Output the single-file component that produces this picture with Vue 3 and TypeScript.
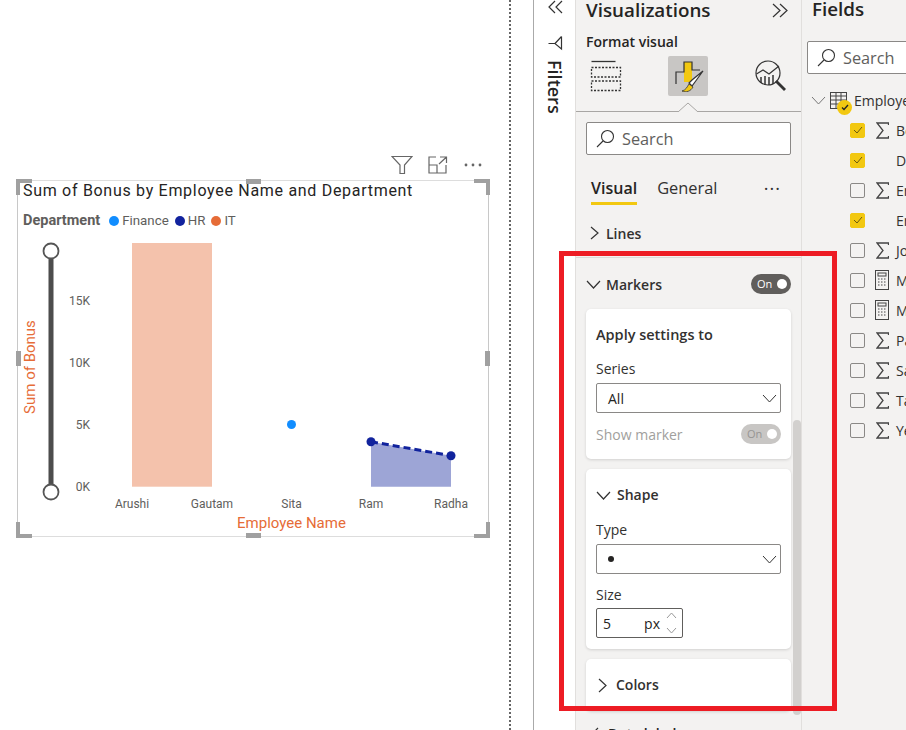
<template>
  <div class="report">
    <main class="canvas">
      <div class="visual-header">
        <svg width="22" height="20" viewBox="0 0 22 20" fill="none" stroke="#666" stroke-width="1.2">
          <path d="M1 1.5H21L13.5 10V18.500H9V10Z" />
        </svg>
        <svg width="20" height="18" viewBox="0 0 20 18" fill="none" stroke="#666" stroke-width="1.2">
          <path d="M8 1H1V17H18V9M1 9H9V17M12 1H18.500V7M18.500 1L11 8" />
        </svg>
        <svg width="20" height="6" viewBox="0 0 20 6" fill="#666">
          <circle cx="3" cy="3" r="1.400" /><circle cx="10" cy="3" r="1.400" /><circle cx="17" cy="3" r="1.400" />
        </svg>
      </div>
      <section class="visual">
        <i class="handle tl"></i><i class="handle tr"></i><i class="handle bl"></i><i class="handle br"></i>
        <i class="handle tc"></i><i class="handle bc"></i><i class="handle ml"></i><i class="handle mr"></i>
        <h2 class="visual-title">Sum of Bonus by Employee Name and Department</h2>
        <div class="legend">
          <b>Department</b>
          <span v-for="l in legend" :key="l.name" class="legend-item">
            <i :style="{ background: l.color }"></i>{{ l.name }}
          </span>
        </div>
        <svg class="plot" width="470" height="305" viewBox="0 0 470 305">
          <rect x="114" y="12" width="80" height="243.700" fill="#f4c2ac" />
          <path d="M353 210.700L433 224.700V255.700H353Z" fill="#9da5d6" />
          <path d="M353 210.700L433 224.700" stroke="#11239d" stroke-width="3" stroke-dasharray="7 4" fill="none" />
          <circle cx="353" cy="210.700" r="4.500" fill="#11239d" />
          <circle cx="433" cy="224.700" r="4.500" fill="#11239d" />
          <circle cx="273.500" cy="193.500" r="4.500" fill="#118dff" />
          <line x1="33" y1="20" x2="33" y2="261" stroke="#4d4d4d" stroke-width="5" />
          <circle cx="33" cy="20" r="7.500" fill="#fff" stroke="#555" stroke-width="1.800" />
          <circle cx="33" cy="261" r="7.500" fill="#fff" stroke="#555" stroke-width="1.800" />
          <text v-for="t in yTicks" :key="t.label" class="tick" x="72" :y="t.y" text-anchor="end">{{ t.label }}</text>
          <text v-for="t in xTicks" :key="t.label" class="tick" :x="t.x" y="277" text-anchor="middle">{{ t.label }}</text>
          <text class="axis-title" x="273.500" y="297" text-anchor="middle">Employee Name</text>
          <text class="axis-title" transform="translate(17 136) rotate(-90)" text-anchor="middle">Sum of Bonus</text>
        </svg>
      </section>
    </main>

    <aside class="filters">
      <svg class="chev-double" width="16" height="14" viewBox="0 0 16 14" fill="none" stroke="#333" stroke-width="1.200">
        <path d="M8 1L2 7L8 13M15 1L9 7L15 13" />
      </svg>
      <svg class="filter-icon" width="16" height="16" viewBox="0 0 16 16" fill="none" stroke="#333" stroke-width="1.200">
        <path d="M14.500 1.500V14L8 8.500H1.500M8 8.500L14.500 1.500" />
      </svg>
      <span class="filters-label">Filters</span>
    </aside>

    <aside class="viz">
      <div class="viz-top">
        <div class="pane-head">
          <h1>Visualizations</h1>
          <svg width="17" height="15" viewBox="0 0 17 15" fill="none" stroke="#333" stroke-width="1.200">
            <path d="M1 1L8 7.500L1 14M8 1L15 7.500L8 14" />
          </svg>
        </div>
        <div class="format-label">Format visual</div>
        <div class="viz-icons">
          <svg width="32" height="32" viewBox="0 0 32 32" fill="none" stroke="#333" stroke-width="1.300">
            <path d="M1.500 1.500H25.500" />
            <rect x="1.500" y="7.500" width="29" height="9.500" stroke-dasharray="2 1.500" />
            <rect x="1.500" y="21" width="29" height="9.500" stroke-dasharray="2 1.500" />
          </svg>
          <div class="format-btn">
            <svg width="32" height="32" viewBox="0 0 32 32" fill="none">
              <rect x="12" y="2" width="8" height="20" fill="#f2c811" />
              <path d="M4 24V12H12V2H20V10H28" stroke="#333" stroke-width="1.200" />
              <path d="M31 11L20 20L17 23L20 26L23 22Z" fill="#fff" stroke="#333" stroke-width="1.200" />
              <path d="M10 31C14 30 15 27 17 24L21 27C19 31 14 33 10 31Z" fill="#f2c811" stroke="#333" stroke-width="0.800" />
            </svg>
          </div>
          <svg class="insights" width="32" height="32" viewBox="0 0 32 32" fill="none" stroke="#333" stroke-width="1.200">
            <circle cx="13" cy="13" r="12" />
            <path d="M21 21L30 30" stroke-width="2.800" />
            <path d="M1.500 14L8 10L14 14L24 6" />
            <path d="M6 17V23M10 16V25M14 17V25M18 15V24" stroke-width="1.500" />
          </svg>
        </div>
        <svg class="pointer" width="20" height="10" viewBox="0 0 20 10">
          <path d="M0 10L10 1L20 10" fill="#f3f2f1" stroke="#a8a6a4" stroke-width="1" />
        </svg>
      </div>

      <label class="search viz-search">
        <svg width="20" height="20" viewBox="0 0 20 20" fill="none" stroke="#333" stroke-width="1.100">
          <circle cx="12.500" cy="7.500" r="6" /><path d="M8 12L2 18" />
        </svg>
        <span>Search</span>
      </label>

      <div class="tabs">
        <span class="tab active">Visual</span>
        <span class="tab">General</span>
        <span class="tab-more">···</span>
      </div>

      <div class="section-row lines-row">
        <svg width="10" height="14" viewBox="0 0 10 14" fill="none" stroke="#333" stroke-width="1.200"><path d="M1 1L8 7L1 13" /></svg>
        <span>Lines</span>
      </div>

      <div class="section-row markers-row">
        <svg width="15" height="9" viewBox="0 0 15 9" fill="none" stroke="#333" stroke-width="1.200"><path d="M1 1L7.500 8L14 1" /></svg>
        <span>Markers</span>
        <span class="toggle">On<i></i></span>
      </div>

      <div class="card apply-card">
        <div class="card-title">Apply settings to</div>
        <div class="field-label">Series</div>
        <div class="select">
          <span>All</span>
          <svg width="15" height="9" viewBox="0 0 15 9" fill="none" stroke="#333" stroke-width="1"><path d="M1 1L7.500 8L14 1" /></svg>
        </div>
        <div class="show-marker">
          <span>Show marker</span>
          <span class="toggle off">On<i></i></span>
        </div>
      </div>

      <div class="card shape-card">
        <div class="card-head">
          <svg width="15" height="9" viewBox="0 0 15 9" fill="none" stroke="#333" stroke-width="1.200"><path d="M1 1L7.500 8L14 1" /></svg>
          <span>Shape</span>
        </div>
        <div class="field-label type-label">Type</div>
        <div class="select">
          <span class="dot"></span>
          <svg width="15" height="9" viewBox="0 0 15 9" fill="none" stroke="#333" stroke-width="1"><path d="M1 1L7.500 8L14 1" /></svg>
        </div>
        <div class="field-label size-label">Size</div>
        <div class="spin">
          <span class="spin-val">5</span>
          <span class="spin-unit">px</span>
          <svg width="11" height="24" viewBox="0 0 11 24" fill="none" stroke="#999" stroke-width="1">
            <path d="M1 7L5.500 2L10 7M1 17L5.500 22L10 17" />
          </svg>
        </div>
      </div>

      <div class="card colors-card">
        <div class="card-head">
          <svg width="10" height="15" viewBox="0 0 10 15" fill="none" stroke="#333" stroke-width="1.200"><path d="M1 1L8 7.500L1 14" /></svg>
          <span>Colors</span>
        </div>
      </div>

      <div class="scrollbar"></div>
      <div class="cutoff">
        <svg width="10" height="14" viewBox="0 0 10 14" fill="none" stroke="#333" stroke-width="1.200"><path d="M8 1L2 7L8 13" /></svg>
        <span>Data labels</span>
      </div>
    </aside>

    <aside class="fields">
      <h1>Fields</h1>
      <label class="search fields-search">
        <svg width="20" height="20" viewBox="0 0 20 20" fill="none" stroke="#333" stroke-width="1.100">
          <circle cx="12.500" cy="7.500" r="6" /><path d="M8 12L2 18" />
        </svg>
        <span>Search</span>
      </label>
      <div class="table-row">
        <svg width="15" height="9" viewBox="0 0 15 9" fill="none" stroke="#777" stroke-width="1"><path d="M1 1L7.500 8L14 1" /></svg>
        <span class="table-icon">
          <svg width="17" height="17" viewBox="0 0 17 17" fill="none" stroke="#444" stroke-width="1">
            <rect x="0.500" y="0.500" width="16" height="16" />
            <path d="M0.500 4H16.500M0.500 8H16.500M0.500 12H16.500M6 0.500V16.500M11 0.500V16.500" />
          </svg>
          <i class="table-check">
            <svg width="8" height="7" viewBox="0 0 8 7" fill="none" stroke="#222" stroke-width="1.300"><path d="M1 3.500L3 5.500L7 1" /></svg>
          </i>
        </span>
        <span>Employee</span>
      </div>
      <div v-for="f in fields" :key="f.name" class="field-row">
        <span class="check" :class="{ on: f.on }">
          <svg v-if="f.on" width="10" height="8" viewBox="0 0 10 8" fill="none" stroke="#6b5a10" stroke-width="1"><path d="M1 4L4 7L9 1" /></svg>
        </span>
        <span class="field-icon">
          <svg v-if="f.icon === 'sum'" width="13" height="17" viewBox="0 0 13 17" fill="none" stroke="#444" stroke-width="1.300">
            <path d="M12.500 3V1H1L7 8.500L1 16H12.500V14" />
          </svg>
          <svg v-else-if="f.icon === 'calc'" width="14" height="20" viewBox="0 0 14 20" fill="none" stroke="#444" stroke-width="1">
            <rect x="0.500" y="0.500" width="13" height="19" />
            <rect x="3" y="3" width="8" height="3" />
            <path d="M3 9H11M3 12H11M3 15H11" stroke-dasharray="1.500 1.500" />
          </svg>
        </span>
        <span class="field-name">{{ f.name }}</span>
      </div>
    </aside>

    <div class="callout"></div>
  </div>
</template>

<script setup lang="ts">
type FieldIcon = 'sum' | 'calc' | 'none'

const legend = [
  { name: 'Finance', color: '#118dff' },
  { name: 'HR', color: '#12239e' },
  { name: 'IT', color: '#e66c37' },
]

const yTicks = [
  { label: '15K', y: 74 },
  { label: '10K', y: 136 },
  { label: '5K', y: 198 },
  { label: '0K', y: 260 },
]

const xTicks = [
  { label: 'Arushi', x: 114 },
  { label: 'Gautam', x: 194 },
  { label: 'Sita', x: 273.5 },
  { label: 'Ram', x: 353 },
  { label: 'Radha', x: 433 },
]

const fields: { name: string; on: boolean; icon: FieldIcon }[] = [
  { name: 'Bonus', on: true, icon: 'sum' },
  { name: 'Department', on: true, icon: 'none' },
  { name: 'Employee ID', on: false, icon: 'sum' },
  { name: 'Employee Name', on: true, icon: 'none' },
  { name: 'Job', on: false, icon: 'sum' },
  { name: 'Measure', on: false, icon: 'calc' },
  { name: 'Measure 2', on: false, icon: 'calc' },
  { name: 'Pay', on: false, icon: 'sum' },
  { name: 'Salary', on: false, icon: 'sum' },
  { name: 'Tax', on: false, icon: 'sum' },
  { name: 'Year', on: false, icon: 'sum' },
]
</script>

<style>
body {
  margin: 0;
  background: #fff;
}
</style>

<style scoped>
.report {
  position: relative;
  display: flex;
  width: 906px;
  height: 730px;
  overflow: hidden;
  background: #fff;
  color: #252423;
  font-family: "Open Sans", "Noto Sans", sans-serif;
}
.canvas {
  flex: 0 0 511px;
  box-sizing: border-box;
  width: 511px;
  padding: 153px 0 0 17px;
  border-right: 2px dotted #666;
}
.filters {
  flex: 0 0 43px;
  box-sizing: border-box;
  margin-left: 22px;
  border-left: 1px solid #aaa;
  border-right: 1px solid #e1dfdd;
  display: flex;
  flex-direction: column;
  align-items: center;
}
.visual-header {
  display: flex;
  align-items: center;
  justify-content: flex-end;
  gap: 15px;
  width: 466px;
  height: 24px;
}
.visual {
  position: relative;
  box-sizing: border-box;
  width: 472px;
  height: 357px;
  margin-top: 3px;
  border: 1px solid #c8c8c8;
  border-top-color: #ddd;
  border-bottom-color: #ddd;
  padding: 0 0 0 5px;
}
.handle {
  position: absolute;
  background: #a0a0a0;
}
.handle.tl, .handle.tr, .handle.bl, .handle.br {
  width: 12px;
  height: 12px;
  background: none;
  border: 0 solid #a0a0a0;
}
.handle.tl { left: -2px; top: -2px; border-width: 4px 0 0 4px; }
.handle.tr { right: -2px; top: -2px; border-width: 4px 4px 0 0; }
.handle.bl { left: -2px; bottom: -2px; border-width: 0 0 4px 4px; }
.handle.br { right: -2px; bottom: -2px; border-width: 0 4px 4px 0; }
.handle.tc, .handle.bc {
  left: 228px;
  width: 15px;
  height: 5px;
}
.handle.tc { top: -2px; }
.handle.bc { bottom: -2px; }
.handle.ml, .handle.mr {
  top: 170px;
  width: 5px;
  height: 15px;
}
.handle.ml { left: -2px; }
.handle.mr { right: -2px; }
.visual-title {
  margin: 0;
  font: 400 16px/20px Roboto, sans-serif;
  letter-spacing: 0.7px;
  color: #252423;
}
.legend {
  display: flex;
  align-items: center;
  height: 18px;
  margin-top: 11px;
  font: 400 13.300px/18px Roboto, sans-serif;
  color: #605e5c;
}
.legend b {
  margin-right: 9px;
  font-size: 14.500px;
}
.legend-item {
  display: flex;
  align-items: center;
  margin-right: 6px;
}
.legend-item i {
  width: 10px;
  height: 10px;
  margin-right: 3px;
  border-radius: 50%;
}
.plot {
  display: block;
  margin: 1px 0 0 -5px;
}
.tick {
  font: 400 12px Roboto, sans-serif;
  fill: #605e5c;
}
.axis-title {
  font: 400 15px Roboto, sans-serif;
  fill: #e66c37;
}
.filter-icon {
  margin-top: 21px;
}
.filters-label {
  margin-top: 9px;
  writing-mode: vertical-rl;
  font-size: 18px;
  font-weight: 600;
  line-height: 22px;
  color: #252423;
}
.viz {
  position: relative;
  flex: 0 0 226px;
  box-sizing: border-box;
  height: 730px;
  padding: 0 10px;
  background: #f3f2f1;
  border-right: 1px solid #e1dfdd;
}
.viz-top {
  position: relative;
  height: 111px;
  margin: 0 -10px;
  padding: 0 10px;
  border-bottom: 1px solid #a8a6a4;
}
.pane-head {
  display: flex;
  align-items: center;
  justify-content: space-between;
  height: 20px;
  padding-right: 2px;
}
h1 {
  margin: 0;
  font-size: 18.800px;
  font-weight: 600;
  line-height: 18px;
  color: #252423;
}
.format-label {
  margin-top: 13px;
  font-size: 14px;
  font-weight: 600;
  line-height: 18px;
}
.viz-icons {
  display: flex;
  align-items: center;
  gap: 46px;
  margin-top: 5px;
  padding-left: 4px;
}
.format-btn {
  display: flex;
  align-items: center;
  justify-content: center;
  width: 40px;
  height: 40px;
  border-radius: 2px;
  background: #c8c6c4;
}
.insights {
  margin-left: 1px;
}
.pointer {
  position: absolute;
  left: 102px;
  bottom: -1px;
  display: block;
}
.search {
  display: flex;
  align-items: center;
  gap: 7px;
  box-sizing: border-box;
  height: 33px;
  padding: 0 8px;
  background: #fff;
  border: 1px solid #8a8886;
  border-radius: 2px;
  font-size: 16.300px;
  color: #605e5c;
}
.viz-search {
  margin-top: 10px;
  width: 205px;
}
.tabs {
  display: flex;
  align-items: center;
  gap: 20px;
  height: 28px;
  margin-top: 19px;
  padding-left: 5px;
  font-size: 16.400px;
  color: #323130;
}
.tab {
  position: relative;
  line-height: 28px;
}
.tab.active {
  font-size: 16px;
  font-weight: 600;
  color: #252423;
}
.tab.active::after {
  content: "";
  position: absolute;
  left: 0;
  right: 0;
  bottom: -3px;
  height: 3px;
  background: #f2c811;
}
.tab-more {
  margin-left: auto;
  margin-right: 10px;
  font-size: 18px;
  letter-spacing: 1px;
}
.section-row {
  display: flex;
  align-items: center;
  font-size: 14px;
  font-weight: 600;
  color: #323130;
}
.lines-row {
  gap: 6px;
  height: 30px;
  margin: 16px -10px 0;
  padding: 0 0 9px 14px;
  border-bottom: 1px solid #dcdad8;
}
.markers-row {
  gap: 5px;
  height: 24px;
  margin-top: 14px;
}
.toggle {
  position: relative;
  box-sizing: border-box;
  width: 40px;
  height: 20px;
  margin-left: auto;
  padding-left: 6px;
  border-radius: 10px;
  background: #605e5c;
  color: #fff;
  font-size: 11px;
  font-weight: 400;
  line-height: 20px;
}
.toggle i {
  position: absolute;
  right: 4px;
  top: 5px;
  width: 10px;
  height: 10px;
  border-radius: 50%;
  background: #fff;
}
.toggle.off {
  background: #c8c6c4;
  color: #979593;
}
.card {
  box-sizing: border-box;
  width: 205px;
  margin-top: 10px;
  padding: 0 10px;
  background: #fff;
  border-radius: 5px;
  box-shadow: 0 1px 3px rgba(0, 0, 0, 0.14);
}
.apply-card {
  height: 150px;
  margin-top: 13px;
}
.shape-card {
  height: 180px;
}
.card-title {
  padding-top: 17px;
  font-size: 14.500px;
  font-weight: 600;
  line-height: 18px;
  color: #323130;
}
.field-label {
  margin-top: 16px;
  font-size: 14px;
  line-height: 18px;
  color: #323130;
}
.select {
  display: flex;
  align-items: center;
  justify-content: space-between;
  box-sizing: border-box;
  height: 30px;
  margin-top: 5px;
  padding: 0 3px 0 11px;
  border: 1px solid #8a8886;
  border-radius: 2px;
  font-size: 14px;
}
.show-marker {
  display: flex;
  align-items: center;
  height: 20px;
  margin-top: 11px;
  font-size: 14px;
  color: #a19f9d;
}
.card-head {
  display: flex;
  align-items: center;
  gap: 6px;
  padding-top: 17px;
  font-size: 14px;
  font-weight: 600;
  line-height: 18px;
  color: #323130;
}
.type-label {
  margin-top: 17px;
}
.dot {
  width: 6px;
  height: 6px;
  border-radius: 50%;
  background: #252423;
}
.size-label {
  margin-top: 12px;
}
.spin {
  display: flex;
  align-items: center;
  box-sizing: border-box;
  width: 87px;
  height: 30px;
  margin-top: 4px;
  padding: 0 5px 0 6px;
  border: 1px solid #605e5c;
  border-radius: 2px;
  font-size: 14px;
}
.spin-val {
  flex: 1;
}
.spin-unit {
  margin-right: 6px;
}
.colors-card {
  height: 52px;
}
.colors-card .card-head {
  gap: 8px;
}
.colors-card .card-head svg {
  margin-left: 2px;
}
.scrollbar {
  position: absolute;
  left: 217px;
  top: 420px;
  width: 8px;
  height: 295px;
  border-radius: 4px;
  background: #d2d0ce;
}
.cutoff {
  display: flex;
  align-items: center;
  gap: 8px;
  position: absolute;
  left: 14px;
  top: 724px;
  font-size: 14px;
  font-weight: 600;
}
.fields {
  flex: 1;
  min-width: 0;
  box-sizing: border-box;
  padding: 0 0 0 10px;
  background: #f3f2f1;
  white-space: nowrap;
  overflow: hidden;
}
.fields h1 {
  height: 20px;
}
.fields-search {
  width: 120px;
  margin-top: 21px;
  margin-left: -5px;
}
.table-row {
  display: flex;
  align-items: center;
  gap: 4px;
  height: 20px;
  margin-top: 16px;
  margin-left: -1px;
  font-size: 14px;
  color: #323130;
}
.table-row > svg {
  flex: none;
}
.table-icon {
  position: relative;
  display: block;
  flex: none;
  width: 17px;
  height: 17px;
  margin-right: 3px;
}
.table-check {
  position: absolute;
  right: -5px;
  bottom: -6px;
  display: flex;
  align-items: center;
  justify-content: center;
  width: 15px;
  height: 15px;
  border-radius: 50%;
  background: #f2c811;
}
.field-row {
  display: flex;
  align-items: center;
  height: 30px;
  margin-left: 38px;
  font-size: 14px;
  color: #323130;
}
.table-row + .field-row {
  margin-top: 5px;
}
.check {
  display: flex;
  align-items: center;
  justify-content: center;
  box-sizing: border-box;
  flex: 0 0 15px;
  height: 15px;
  border: 1px solid #8a8886;
  border-radius: 2px;
}
.check.on {
  border-color: #f2c811;
  background: #f2c811;
}
.field-icon {
  display: flex;
  justify-content: center;
  flex: 0 0 14px;
  margin-left: 10px;
}
.field-name {
  margin-left: 7px;
}
.callout {
  position: absolute;
  left: 559px;
  top: 251px;
  box-sizing: border-box;
  width: 278px;
  height: 460px;
  border: 5px solid #ed1c24;
  pointer-events: none;
}
</style>
